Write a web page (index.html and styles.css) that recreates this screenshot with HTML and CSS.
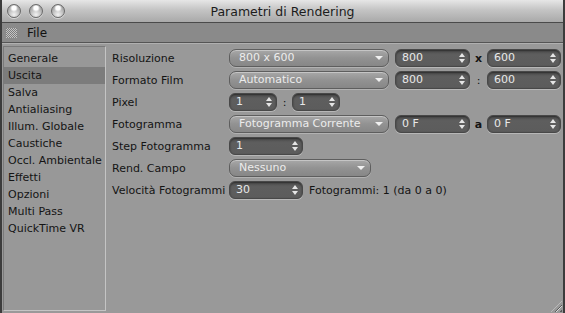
FILE: index.html
```html
<!DOCTYPE html>
<html lang="it">
<head>
<meta charset="utf-8">
<title>Parametri di Rendering</title>
<link rel="stylesheet" href="styles.css">
</head>
<body>
<div class="window">
  <div class="titlebar">
    <div class="lights">
      <span class="light"></span><span class="light"></span><span class="light"></span>
    </div>
    <div class="title">Parametri di Rendering</div>
  </div>
  <div class="menubar">
    <span class="grip"></span>
    <span class="menu">File</span>
  </div>
  <div class="body">
    <ul class="sidebar">
      <li>Generale</li>
      <li class="sel">Uscita</li>
      <li>Salva</li>
      <li>Antialiasing</li>
      <li>Illum. Globale</li>
      <li>Caustiche</li>
      <li>Occl. Ambientale</li>
      <li>Effetti</li>
      <li>Opzioni</li>
      <li>Multi Pass</li>
      <li>QuickTime VR</li>
    </ul>
    <div class="form">
      <div class="row">
        <span class="label">Risoluzione</span>
        <span class="drop w160">800 x 600<i class="chev"></i></span>
        <span class="field w75 ml6">800<i class="spin"></i></span>
        <span class="sep sx">x</span>
        <span class="field w74">600<i class="spin"></i></span>
      </div>
      <div class="row">
        <span class="label">Formato Film</span>
        <span class="drop w160">Automatico<i class="chev"></i></span>
        <span class="field w75 ml6">800<i class="spin"></i></span>
        <span class="sep">:</span>
        <span class="field w74">600<i class="spin"></i></span>
      </div>
      <div class="row">
        <span class="label">Pixel</span>
        <span class="field w48">1<i class="spin"></i></span>
        <span class="sep sp">:</span>
        <span class="field w48">1<i class="spin"></i></span>
      </div>
      <div class="row">
        <span class="label">Fotogramma</span>
        <span class="drop w160">Fotogramma Corrente<i class="chev"></i></span>
        <span class="field w75 ml6">0 F<i class="spin"></i></span>
        <span class="sep sa">a</span>
        <span class="field w74">0 F<i class="spin"></i></span>
      </div>
      <div class="row">
        <span class="label">Step Fotogramma</span>
        <span class="field w74">1<i class="spin"></i></span>
      </div>
      <div class="row">
        <span class="label">Rend. Campo</span>
        <span class="drop w142">Nessuno<i class="chev"></i></span>
      </div>
      <div class="row">
        <span class="label">Velocità Fotogrammi</span>
        <span class="field w74">30<i class="spin"></i></span>
        <span class="info">Fotogrammi: 1 (da 0 a 0)</span>
      </div>
    </div>
  </div>
  <span class="resize"></span>
</div>
</body>
</html>
```

FILE: styles.css
```css
* { box-sizing: border-box; }
html, body { margin: 0; padding: 0; }
body {
  width: 565px;
  height: 313px;
  overflow: hidden;
  background: #9a9a9a;
  font-family: "DejaVu Sans", "Noto Sans", sans-serif;
  font-size: 11px;
  color: #1a1a1a;
}
.window {
  position: relative;
  width: 565px;
  height: 313px;
  background: #999999;
  border-left: 2px solid #3c3c3c;
  border-right: 2px solid #3c3c3c;
  display: flex;
  flex-direction: column;
}
.titlebar {
  height: 23px;
  flex: none;
  display: flex;
  align-items: center;
  background: linear-gradient(#e6e6e6, #c4c4c4 45%, #a9a9a9);
  border-bottom: 1px solid #4a4a4a;
  position: relative;
}
.lights {
  display: flex;
  gap: 8px;
  padding-left: 5px;
}
.light {
  width: 14px;
  height: 14px;
  border-radius: 50%;
  border: 1px solid #6a6a6a;
  background:
    radial-gradient(circle at 50% 25%, #ffffff 0 2px, rgba(255,255,255,0) 4px),
    radial-gradient(circle at 50% 80%, #f2f2f2, #b6b6b6 55%, #8c8c8c);
  box-shadow: 0 1px 0 rgba(255,255,255,0.5);
}
.title {
  position: absolute;
  left: 0;
  right: 0;
  text-align: center;
  font-size: 12.5px;
  color: #1c1c1c;
  line-height: 23px;
}
.menubar {
  height: 20px;
  flex: none;
  display: flex;
  align-items: center;
  background: #8a8a8a;
  border-bottom: 1px solid #555555;
  box-shadow: 0 1px 0 #b0b0b0;
  padding-left: 4px;
}
.grip {
  width: 11px;
  height: 10px;
  background: repeating-conic-gradient(#c4c4c4 0 25%, #7c7c7c 0 50%) 0 0 / 2px 2px;
}
.menu {
  margin-left: 10px;
  font-size: 12px;
  color: #111;
}
.body {
  flex: 1;
  display: flex;
  padding: 3px 0 2px 1px;
}
.sidebar {
  list-style: none;
  margin: 0;
  padding: 3px 0 0 0;
  width: 103px;
  border: 1px solid #c4c4c4;
  border-top-color: #7a7a7a;
  border-left-color: #7a7a7a;
  background: #989898;
}
.sidebar li {
  height: 17px;
  line-height: 17px;
  padding-left: 4px;
  white-space: nowrap;
  color: #141414;
}
.sidebar li.sel { background: #7c7c7c; }
.form {
  padding: 3px 0 0 6px;
  display: flex;
  flex-direction: column;
  gap: 4px;
}
.row {
  display: flex;
  align-items: center;
  height: 18px;
}
.label {
  width: 117px;
  flex: none;
  white-space: nowrap;
  color: #141414;
}
.drop {
  position: relative;
  height: 18px;
  line-height: 16px;
  border-radius: 7px;
  border: 1px solid #5e5e5e;
  background: linear-gradient(#a8a8a8, #929292 50%, #878787);
  box-shadow: inset 0 1px 0 rgba(255,255,255,0.35), 0 1px 0 rgba(255,255,255,0.25);
  color: #ececec;
  padding-left: 9px;
  white-space: nowrap;
}
.chev {
  position: absolute;
  right: 5px;
  top: 6px;
  width: 0;
  height: 0;
  border-left: 4px solid transparent;
  border-right: 4px solid transparent;
  border-top: 4px solid #f0f0f0;
}
.field {
  position: relative;
  height: 18px;
  line-height: 16px;
  border-radius: 6px;
  border: 1px solid #484848;
  background: linear-gradient(#4e4e4e, #5e5e5e 30%, #5c5c5c);
  box-shadow: inset 0 1px 2px rgba(0,0,0,0.45), 0 1px 0 rgba(255,255,255,0.3);
  color: #e8e8e8;
  padding-left: 6px;
  white-space: nowrap;
}
.spin {
  position: absolute;
  right: 4px;
  top: 3px;
  width: 6px;
  height: 10px;
}
.spin::before, .spin::after {
  content: "";
  position: absolute;
  left: 0;
  width: 0;
  height: 0;
  border-left: 3px solid transparent;
  border-right: 3px solid transparent;
}
.spin::before { top: 0; border-bottom: 4px solid #e6e6e6; }
.spin::after { bottom: 0; border-top: 4px solid #e6e6e6; }
.w160 { width: 160px; }
.w142 { width: 142px; }
.w75 { width: 75px; }
.w74 { width: 74px; }
.w48 { width: 48px; }
.ml6 { margin-left: 6px; }
.sep {
  width: 17px;
  text-align: center;
  color: #141414;
}
.sx { font-weight: bold; }
.sa { font-weight: bold; }
.sp { width: 15px; }
.info {
  margin-left: 6px;
  white-space: nowrap;
  color: #141414;
}
.resize {
  position: absolute;
  right: 1px;
  bottom: 1px;
  width: 11px;
  height: 11px;
  background: repeating-linear-gradient(135deg, transparent 0 2px, #5a5a5a 2px 3px, #d8d8d8 3px 4px);
  clip-path: polygon(100% 0, 100% 100%, 0 100%);
}
```
